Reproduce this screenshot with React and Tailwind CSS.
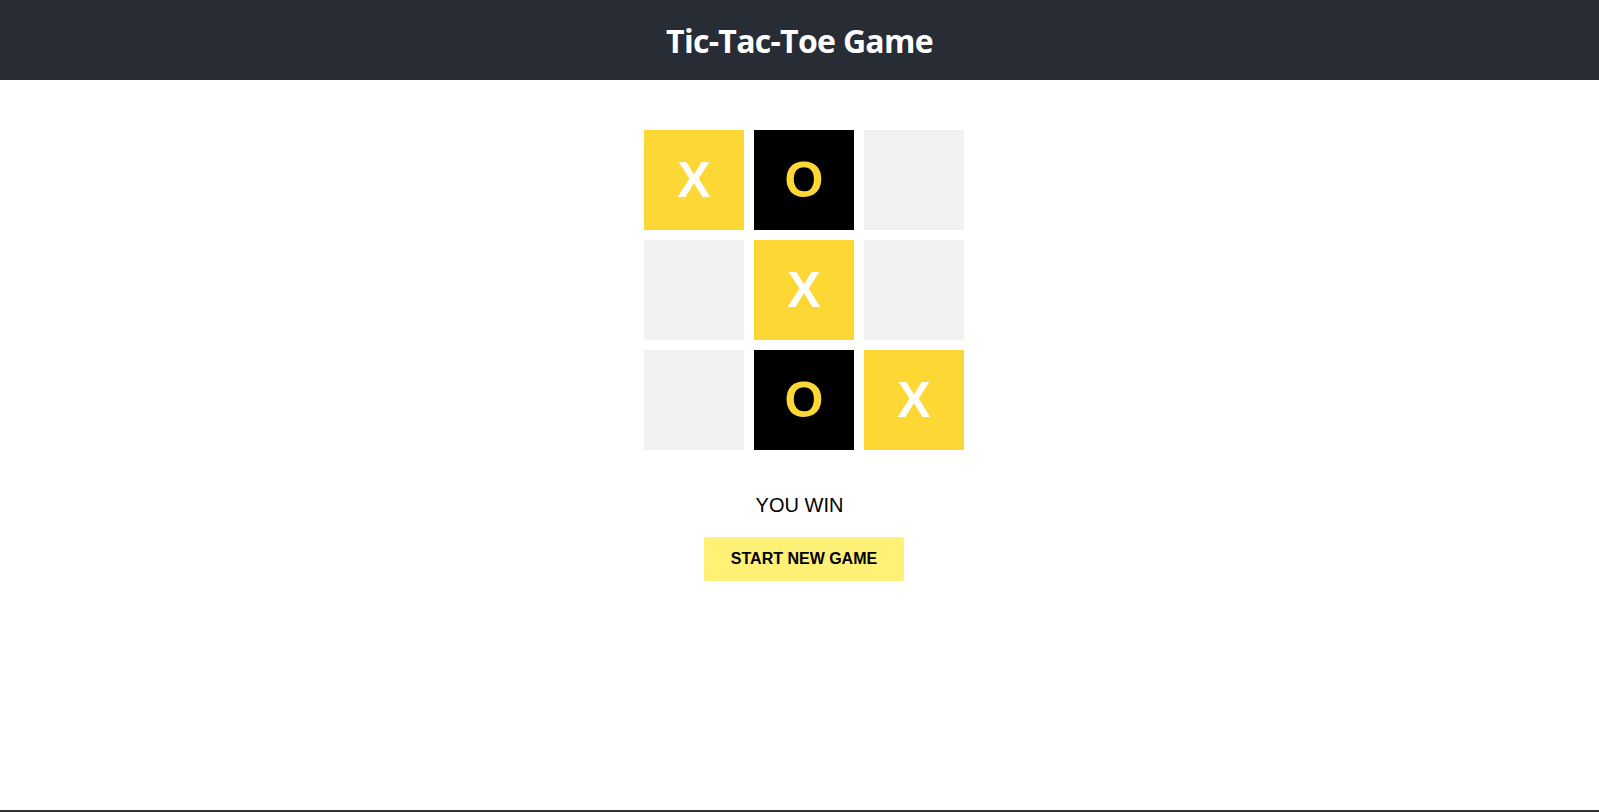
import React from "react";

const board = ["X", "O", null, null, "X", null, null, "O", "X"];

function Cell({ value }) {
  const tone =
    value === "X"
      ? "bg-[#fdd835] text-white"
      : value === "O"
      ? "bg-black text-[#fdd835]"
      : "bg-[#f1f1f1]";
  return (
    <div
      className={`flex h-[100px] w-[100px] items-center justify-center text-[50px] font-bold leading-none ${tone}`}
    >
      {value}
    </div>
  );
}

export default function App() {
  return (
    <div className="flex min-h-[812px] flex-col bg-white font-['Liberation_Sans',Arial,sans-serif]">
      <header className="flex h-[80px] items-center justify-center bg-[#282c34] pt-[2px]">
        <h1 className="font-['Open_Sans',sans-serif] text-[32px] font-bold tracking-[-0.7px] text-white">
          Tic-Tac-Toe Game
        </h1>
      </header>
      <main className="flex flex-1 flex-col items-center">
        <div className="mt-[50px] w-[329px] pl-[9px]">
          <div className="grid grid-cols-[repeat(3,100px)] gap-[10px]">
            {board.map((v, i) => (
              <Cell key={i} value={v} />
            ))}
          </div>
        </div>
        <p className="mt-[41px] text-[20px] leading-[28px] text-black">YOU WIN</p>
        <div className="mt-[18px] w-[209px] pl-[9px]">
          <button className="h-[44px] w-[200px] rounded-[2px] bg-[#fff176] text-[16px] font-bold text-black">
            START NEW GAME
          </button>
        </div>
      </main>
      <div className="h-[2px] bg-[#333]" />
    </div>
  );
}
